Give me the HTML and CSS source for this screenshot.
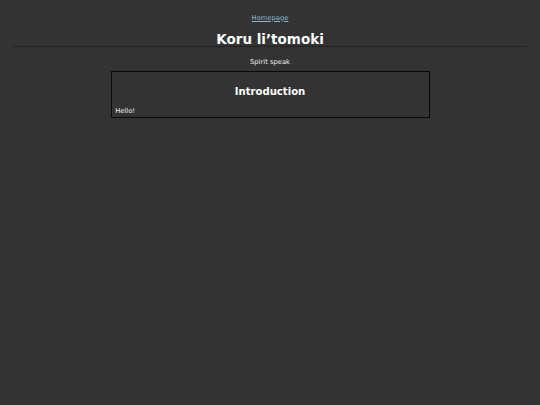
FILE: index.html
```html
<!DOCTYPE html>
<html lang="en">
<head>
<meta charset="utf-8">
<title>Koru li’tomoki</title>
<link rel="stylesheet" href="styles.css">
</head>
<body>
  <header class="site-header">
    <nav class="nav"><a class="nav-link" href="#">Homepage</a></nav>
    <h1 class="title">Koru li’tomoki</h1>
    <p class="tagline">Spirit speak</p>
  </header>
  <main class="content">
    <section class="card">
      <h2 class="card-title">Introduction</h2>
      <p class="card-text">Hello!</p>
    </section>
  </main>
</body>
</html>
```

FILE: styles.css
```css
html, body {
  margin: 0;
  padding: 0;
  background: #333333;
}
body {
  font-family: "DejaVu Sans", Verdana, sans-serif;
  font-size: 6.75px;
  color: #eeeeee;
  width: 540px;
  height: 405px;
}
.site-header {
  display: flex;
  flex-direction: column;
  text-align: center;
}
.nav {
  margin-top: 12.7px;
  line-height: 10px;
}
.nav-link {
  color: #8ab4d4;
  text-decoration: underline;
}
.title {
  margin: 11.6px 13px 0 13px;
  padding-bottom: 0.8px;
  font-size: 13.5px;
  line-height: 11px;
  font-weight: bold;
  color: #ffffff;
  border-bottom: 1px solid #222222;
}
.tagline {
  margin: 10.3px 0 0 0;
  line-height: 10px;
}
.content {
  display: flex;
  justify-content: center;
  margin-top: 3.6px;
}
.card {
  box-sizing: border-box;
  width: 319px;
  border: 1px solid #0a0a0a;
  padding: 0 3.7px 0.6px 3.7px;
}
.card-title {
  margin: 14.2px 0 0 0;
  font-size: 10.125px;
  line-height: 12px;
  font-weight: bold;
  text-align: center;
  color: #ffffff;
}
.card-text {
  margin: 8.2px 0 0 0;
  line-height: 10px;
}
```
